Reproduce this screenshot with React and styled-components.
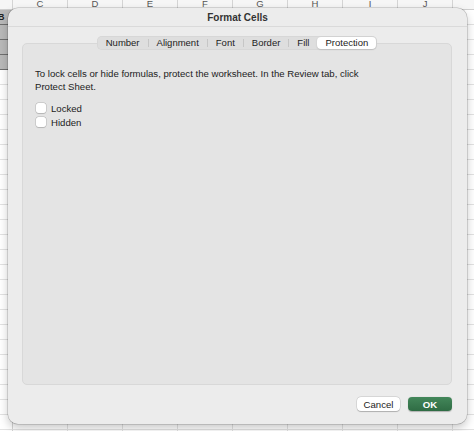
import React from 'react'
import styled, { createGlobalStyle } from 'styled-components'

const COLS = ['C', 'D', 'E', 'F', 'G', 'H', 'I', 'J', 'K']
const TABS = ['Number', 'Alignment', 'Font', 'Border', 'Fill', 'Protection']
const ACTIVE = 'Protection'

const App = () => {
  const rows = Array.from({ length: 30 }, (_, i) => i)
  const activeIdx = TABS.indexOf(ACTIVE)
  return (
    <Page>
      <GlobalStyle />
      <Sheet>
        <HeadRow>
          <LeadHead />
          {COLS.map((c) => (
            <HeadCell key={c}>{c}</HeadCell>
          ))}
        </HeadRow>
        {rows.map((r) => (
          <Row key={r}>
            <LeadCell dark={r < 4}>{r === 0 ? 'B' : ''}</LeadCell>
            {COLS.map((c) => (
              <Cell key={c} />
            ))}
          </Row>
        ))}
      </Sheet>

      <Dialog>
        <TitleBar>Format Cells</TitleBar>
        <Body>
          <TabsRow>
            <Segmented>
              {TABS.map((t, i) => (
                <React.Fragment key={t}>
                  {i > 0 && (
                    <Divider hidden={i === activeIdx || i - 1 === activeIdx} />
                  )}
                  <Tab active={t === ACTIVE}>{t}</Tab>
                </React.Fragment>
              ))}
            </Segmented>
          </TabsRow>
          <Panel>
            <Desc>
              To lock cells or hide formulas, protect the worksheet. In the Review tab, click
              <br />
              Protect Sheet.
            </Desc>
            <Checks>
              <CheckRow>
                <Box />
                <span>Locked</span>
              </CheckRow>
              <CheckRow>
                <Box />
                <span>Hidden</span>
              </CheckRow>
            </Checks>
          </Panel>
          <Footer>
            <CancelBTN>Cancel</CancelBTN>
            <OkBTN>OK</OkBTN>
          </Footer>
        </Body>
      </Dialog>
    </Page>
  )
}

const GlobalStyle = createGlobalStyle`
  html, body {
    margin: 0;
    padding: 0;
  }
  body {
    background: #fff;
    font-family: "Liberation Sans", Arial, sans-serif;
    overflow: hidden;
  }
`
const Page = styled.div`
  position: relative;
  width: 474px;
  height: 431px;
  overflow: hidden;
  background: #fff;
`
const Sheet = styled.div`
  margin-top: -2px;
  display: flex;
  flex-direction: column;
`
const HeadRow = styled.div`
  display: flex;
  height: 11px;
  background: #f6f6f6;
  border-bottom: 1px solid #cfcfcf;
`
const LeadHead = styled.div`
  width: 13px;
  flex: none;
  border-right: 1px solid #d4d4d4;
  box-sizing: border-box;
`
const HeadCell = styled.div`
  width: 55px;
  flex: none;
  box-sizing: border-box;
  border-right: 1px solid #d4d4d4;
  text-align: center;
  font-size: 9.5px;
  line-height: 11px;
  color: #555;
`
const Row = styled.div`
  display: flex;
  height: 15px;
  box-sizing: border-box;
  border-bottom: 1px solid #e2e2e2;
`
const LeadCell = styled.div`
  width: 13px;
  flex: none;
  box-sizing: border-box;
  margin-bottom: -1px;
  background: ${(p) => (p.dark ? '#b9b9b9' : '#fff')};
  border-bottom: 1px solid ${(p) => (p.dark ? '#6f6f6f' : '#e2e2e2')};
  border-right: 1px solid #d4d4d4;
  font-size: 9px;
  font-weight: bold;
  line-height: 14px;
  color: #222;
  text-indent: -2px;
`
const Cell = styled.div`
  width: 55px;
  flex: none;
  box-sizing: border-box;
  border-right: 1px solid #e2e2e2;
`
const Dialog = styled.div`
  position: absolute;
  left: 8px;
  top: 8px;
  width: 459px;
  height: 416px;
  display: flex;
  flex-direction: column;
  background: #ececec;
  border-radius: 10px;
  box-shadow: 0 0 0 0.5px rgba(0, 0, 0, 0.25), 0 4px 10px rgba(0, 0, 0, 0.22);
  color: #222;
`
const TitleBar = styled.div`
  height: 19px;
  flex: none;
  box-sizing: border-box;
  display: flex;
  align-items: center;
  justify-content: center;
  font-size: 10px;
  font-weight: bold;
  color: #333;
  border-bottom: 1px solid #dadada;
`
const Body = styled.div`
  flex: 1;
  display: flex;
  flex-direction: column;
  padding: 9px 15px 13px 14px;
`
const TabsRow = styled.div`
  position: relative;
  z-index: 1;
  display: flex;
  justify-content: center;
  margin-bottom: -7px;
`
const Segmented = styled.div`
  display: flex;
  align-items: center;
  height: 14px;
  padding: 0 1px;
  box-sizing: border-box;
  background: #dedede;
  border-radius: 5px;
  box-shadow: inset 0 0 0 0.5px rgba(0, 0, 0, 0.06);
`
const Tab = styled.div`
  height: 12px;
  padding: 0 8px;
  font-size: 9.5px;
  line-height: 12px;
  color: #222;
  border-radius: 4px;
  background: ${(p) => (p.active ? '#fff' : 'transparent')};
  box-shadow: ${(p) =>
    p.active ? '0 0.5px 1.5px rgba(0, 0, 0, 0.2)' : 'none'};
`
const Divider = styled.div`
  width: 1px;
  height: 8px;
  background: ${(p) => (p.hidden ? 'transparent' : '#c6c6c6')};
`
const Panel = styled.div`
  flex: 1;
  background: #e4e4e4;
  border: 1px solid #d8d8d8;
  border-radius: 5px;
  padding: 23px 12px;
`
const Desc = styled.div`
  font-size: 9.6px;
  line-height: 13px;
  color: #222;
`
const Checks = styled.div`
  margin-top: 8px;
  display: flex;
  flex-direction: column;
`
const CheckRow = styled.div`
  display: flex;
  align-items: center;
  gap: 5px;
  height: 14px;
  font-size: 9.6px;
  color: #222;
`
const Box = styled.div`
  width: 10px;
  height: 10px;
  margin-left: 1px;
  background: #fff;
  border-radius: 2.5px;
  box-shadow: 0 0 0 0.5px rgba(0, 0, 0, 0.18), 0 0.5px 1px rgba(0, 0, 0, 0.12);
`
const Footer = styled.div`
  display: flex;
  justify-content: flex-end;
  gap: 8px;
  margin-top: 12px;
`
const CancelBTN = styled.button`
  width: 43px;
  height: 14px;
  padding: 0;
  border: none;
  border-radius: 4px;
  background: #fff;
  font-family: inherit;
  font-size: 9.6px;
  color: #222;
  box-shadow: 0 0 0 0.5px rgba(0, 0, 0, 0.14), 0 0.5px 1px rgba(0, 0, 0, 0.2);
`
const OkBTN = styled.button`
  width: 44px;
  height: 14px;
  padding: 0;
  border: none;
  border-radius: 4px;
  background: linear-gradient(#43875a, #2f6c44);
  font-family: inherit;
  font-size: 9.6px;
  font-weight: bold;
  color: #fff;
  box-shadow: 0 0.5px 1px rgba(0, 0, 0, 0.25);
`

export default App
